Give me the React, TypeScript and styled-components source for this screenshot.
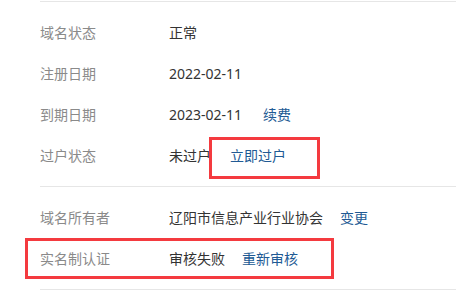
import React from "react";
import styled, { createGlobalStyle } from "styled-components";

const Global = createGlobalStyle`
  html, body { margin: 0; padding: 0; background: #ffffff; }
  body { font-family: "Noto Sans", "Noto Sans CJK SC", sans-serif; width: 456px; height: 300px; overflow: hidden; }
`;

const Page = styled.div`
  padding-left: 40px;
  padding-top: 1px;
`;

const Section = styled.div`
  border-top: 1px solid #e6e6e6;
  padding: 10px 0 10px;
  &:last-child { border-bottom: 1px solid #e6e6e6; }
`;

const Row = styled.div`
  position: relative;
  display: grid;
  grid-template-columns: 129px 1fr;
  align-items: center;
  height: 41px;
  font-size: 14px;
  line-height: 20px;
`;

const Label = styled.div`
  color: #8a8a8a;
`;

const Value = styled.div`
  display: flex;
  align-items: center;
  color: #333333;
  white-space: nowrap;
`;

const Link = styled.a<{ $gap?: number }>`
  position: relative;
  margin-left: ${(p) => p.$gap ?? 18}px;
  color: #215a94;
  text-decoration: none;
  cursor: pointer;
`;

const Mark = styled.span<{ $l: number; $t: number; $w: number; $h: number }>`
  position: absolute;
  left: ${(p) => p.$l}px;
  top: ${(p) => p.$t}px;
  width: ${(p) => p.$w}px;
  height: ${(p) => p.$h}px;
  border: 3px solid #f43a3f;
  box-sizing: border-box;
  pointer-events: none;
`;

export default function App() {
  return (
    <>
      <Global />
      <Page>
        <Section>
          <Row>
            <Label>域名状态</Label>
            <Value>正常</Value>
          </Row>
          <Row>
            <Label>注册日期</Label>
            <Value>2022-02-11</Value>
          </Row>
          <Row>
            <Label>到期日期</Label>
            <Value>
              2023-02-11<Link $gap={21}>续费</Link>
            </Value>
          </Row>
          <Row>
            <Label>过户状态</Label>
            <Value>
              未过户
              <Link $gap={19}>
                立即过户
                <Mark $l={-21} $t={-9} $w={111} $h={42} />
              </Link>
            </Value>
          </Row>
        </Section>
        <Section>
          <Row>
            <Label>域名所有者</Label>
            <Value>
              辽阳市信息产业行业协会<Link $gap={17}>变更</Link>
            </Value>
          </Row>
          <Row>
            <Label>实名制认证</Label>
            <Value>
              审核失败<Link $gap={17}>重新审核</Link>
            </Value>
            <Mark $l={-15} $t={0} $w={309} $h={41} />
          </Row>
        </Section>
      </Page>
    </>
  );
}
